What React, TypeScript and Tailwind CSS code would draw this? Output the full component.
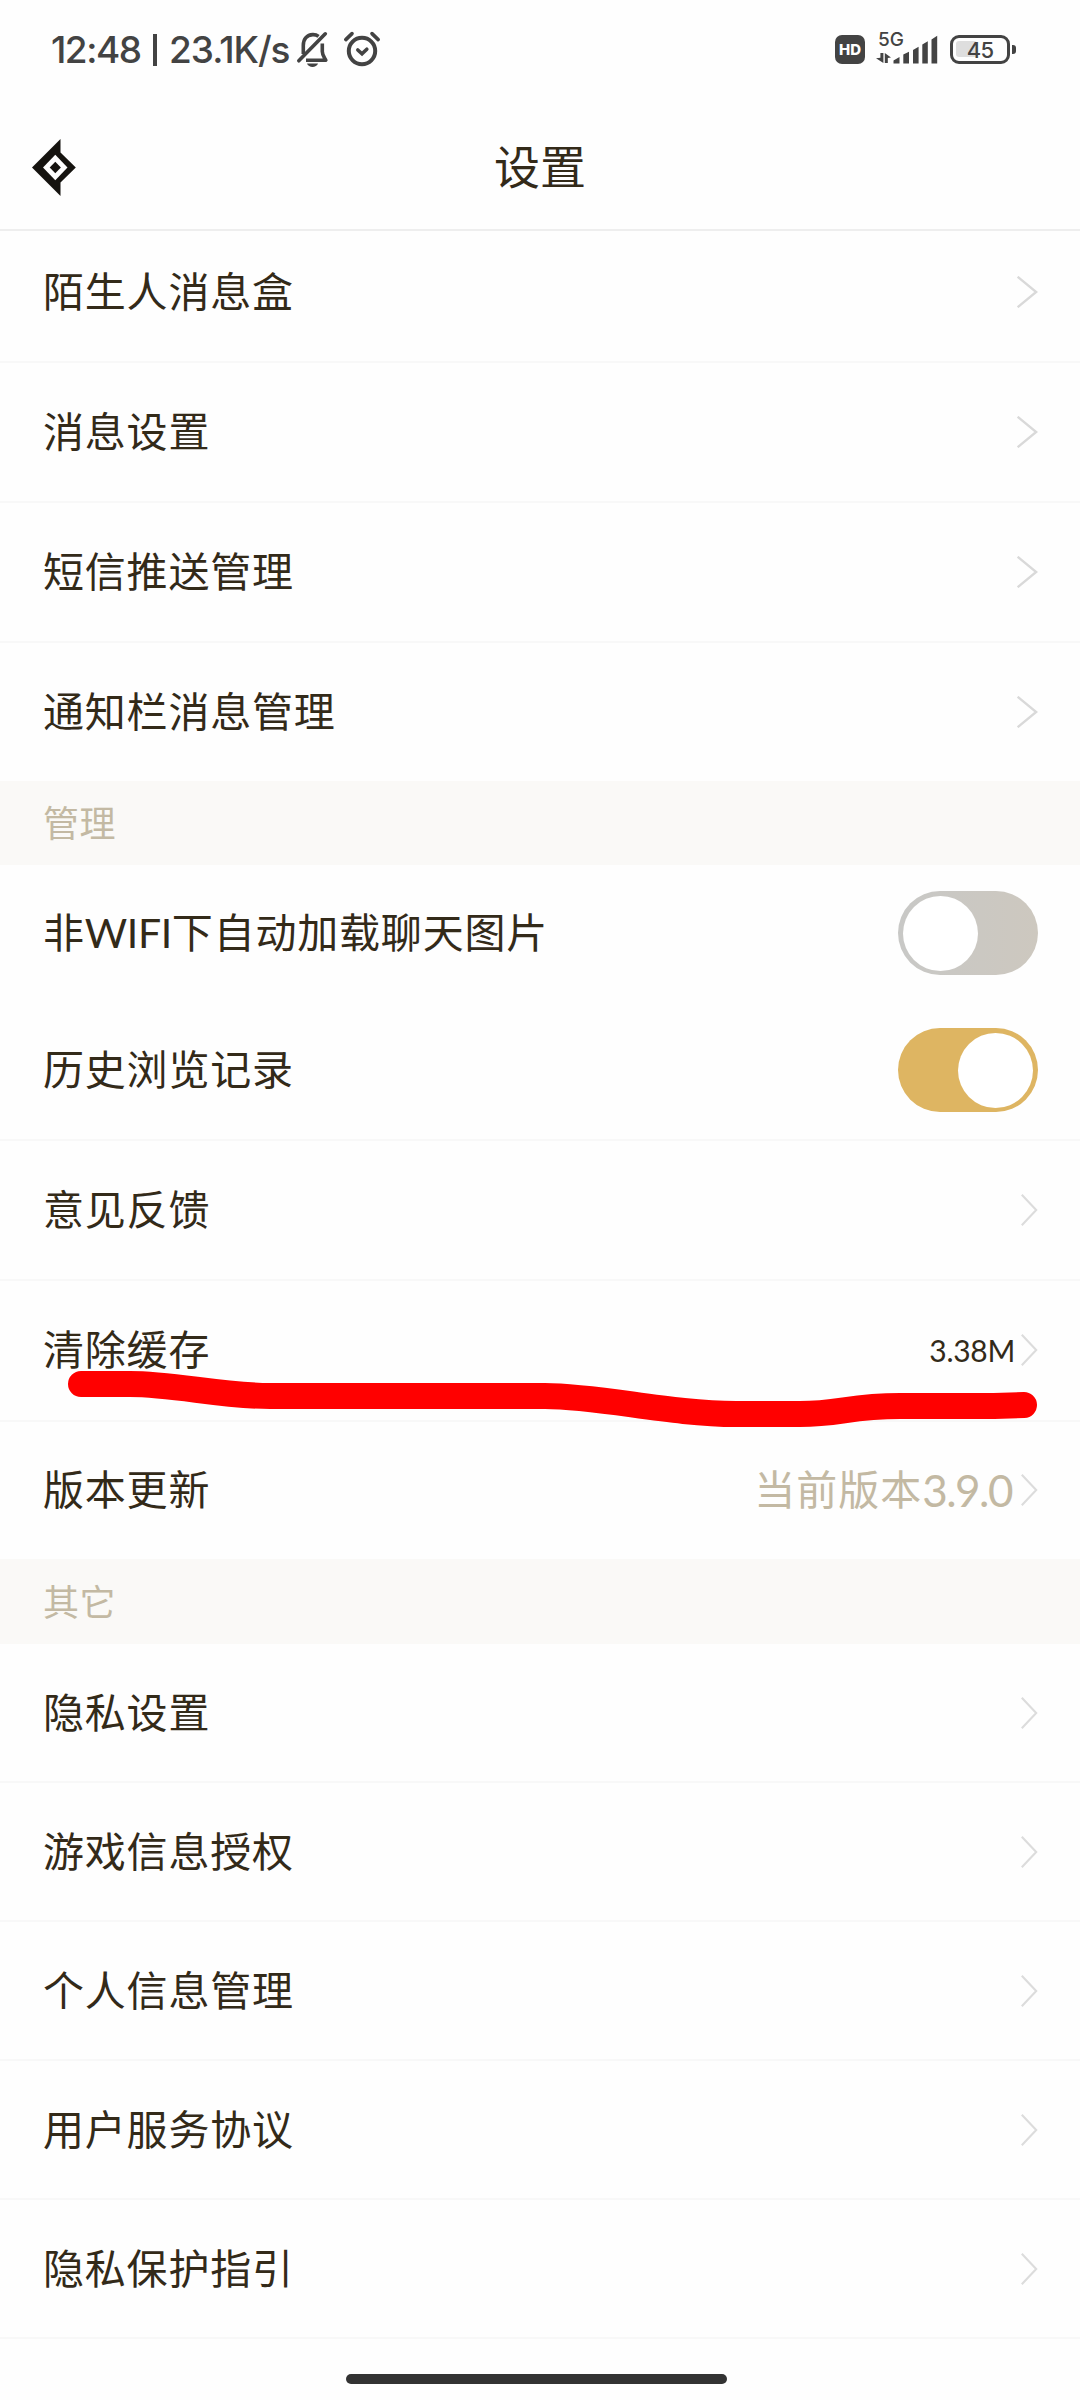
import type { ReactNode } from 'react';

const CJK = "font-['Lato','Noto_Sans_CJK_SC',sans-serif]";

function BellOffIcon() {
  return (
    <svg width="36" height="40" viewBox="0 0 36 40" fill="none" stroke="#434343" strokeWidth="3.6">
      <path d="M8.3 24V15.5C8.3 9 12 5 17.7 4.6C20 4.5 22 5.2 23.6 6.4" />
      <path d="M27.3 13.5V21.5C27.3 25 29 27 30.8 30.2H11" strokeLinejoin="round" />
      <path d="M3.8 30.8L30.3 3.8" strokeLinecap="round" />
      <path d="M12 33.6H23C21.6 38.2 13.4 38.2 12 33.6Z" fill="#434343" stroke="none" />
    </svg>
  );
}

function AlarmIcon() {
  return (
    <svg width="40" height="40" viewBox="0 0 40 40" fill="none" stroke="#434343" strokeLinecap="round">
      <circle cx="20" cy="21" r="13.2" strokeWidth="4" />
      <path d="M15.8 20L20 23.8L24.8 19.2" strokeWidth="3.6" />
      <path d="M3.8 9.6L10 3.6M36.2 9.6L30 3.6" strokeWidth="3.6" />
    </svg>
  );
}

function SignalIcon() {
  return (
    <svg width="64" height="32" viewBox="0 0 64 32" fill="#434343">
      <path d="M4.4 21H7.4V31L0 26.2L4.4 25.8ZM8.8 31V21L15 25.6L11.8 26V31Z" />
      <path d="M17.5 31.5V28.5L23.5 25V31.5ZM27.3 31.5V22.5L33 19.8V31.5ZM37 31.5V18L42.6 14.8V31.5ZM46.3 31.5V12.5L51.8 9.2V31.5ZM55.5 31.5V7.5L61.2 3.8V31.5Z" />
    </svg>
  );
}

function BackIcon() {
  return (
    <svg width="44" height="57" viewBox="0 0 44 57">
      <path d="M0 28.5L28.5 0V13.5L43.8 28.5L28.5 43.5V57Z" fill="#15130f" />
      <path d="M23.3 15.8L35.5 28.5L23.3 41.2L11 28.5Z" fill="#fefefe" />
      <path d="M23.3 22.8L28.9 28.5L23.3 34.2L17.7 28.5Z" fill="#15130f" />
    </svg>
  );
}

function Chevron({ wide }: { wide?: boolean }) {
  return wide ? (
    <svg width="21" height="32" viewBox="0 0 21 32" fill="none" stroke="#d9d9d9" strokeWidth="2.4">
      <path d="M0.6 0.8L19.2 16L0.6 31.2" />
    </svg>
  ) : (
    <svg width="17" height="32" viewBox="0 0 17 32" fill="none" stroke="#dcdcdc" strokeWidth="2.1">
      <path d="M0.8 0.8L15.2 16L0.8 31.2" />
    </svg>
  );
}

function Row({ label, height, line = true, children }: { label: ReactNode; height: string; line?: boolean; children: ReactNode }) {
  return (
    <div className={`flex items-center justify-between pl-[43px] pr-[42px] ${height} ${line ? 'border-b-2 border-[#f8f8f8]' : ''}`}>
      <span className="text-[41px] leading-[56px] tracking-[0.8px] text-[#332a19]">{label}</span>
      <div className="flex items-center">{children}</div>
    </div>
  );
}

function Section({ label, height }: { label: string; height: string }) {
  return (
    <div className={`flex items-center bg-[#faf9f7] pl-[43px] text-[36px] leading-none tracking-[0.4px] text-[#c3b9a3] ${height}`}>{label}</div>
  );
}

function Toggle({ on }: { on: boolean }) {
  return (
    <div className={`flex h-[84px] w-[140px] items-center rounded-full px-[5px] ${on ? 'justify-end bg-[#deb562]' : 'justify-start bg-gradient-to-r from-[#c8c8c6] to-[#cdc8bf]'}`}>
      <div className="size-[75px] rounded-full bg-white" />
    </div>
  );
}

export default function App() {
  return (
    <div className={`relative flex h-[2400px] w-[1080px] flex-col overflow-hidden bg-[#fefefe] ${CJK}`}>
      <div className="flex h-[100px] shrink-0 items-start justify-between pl-[51px] pr-[64px] text-[#434343]">
        <div className="flex items-start">
          <div className="mt-[28px] flex w-[244px] items-center whitespace-nowrap text-[37px] font-medium leading-[44px] font-['Inter',sans-serif]">
            <span className="w-[102px] tracking-[-1.5px]">12:48</span>
            <span className="mr-[12px] h-[32px] w-[4px] bg-[#434343]" />
            <span className="tracking-[-1px]">23.1K/s</span>
          </div>
          <div className="mt-[30px]"><BellOffIcon /></div>
          <div className="ml-[11px] mt-[30px]"><AlarmIcon /></div>
        </div>
        <div className="mt-[32px] flex items-start">
          <div className="mt-[3px] flex h-[29px] w-[30px] items-center justify-center rounded-[7px] bg-[#434343] text-[15px] font-extrabold leading-none text-white font-['Inter',sans-serif]">HD</div>
          <div className="relative ml-[11px]">
            <span className="absolute left-[2px] top-[-2px] text-[19px] font-medium leading-[20px] font-['Inter',sans-serif]">5G</span>
            <SignalIcon />
          </div>
          <div className="relative ml-[10px] mt-[3px] flex h-[29px] w-[60px] items-center justify-center rounded-[9px] border-[3.5px] border-[#434343]">
            <div className="absolute left-[3px] top-[3px] h-4 w-[21px] rounded-[3px] bg-[#dedede]" />
            <span className="relative text-[22px] font-medium leading-none tracking-[-0.8px] font-['Inter',sans-serif]">45</span>
          </div>
          <div className="ml-[2px] mt-[13px] h-[9px] w-[4px] rounded-r-[3px] bg-[#434343]" />
        </div>
      </div>

      <header className="z-10 grid h-[131px] shrink-0 grid-cols-3 items-center border-b-2 border-[#eeeeee] bg-[#fefefe]">
        <div className="pl-[32px] pt-[5px]"><BackIcon /></div>
        <h1 className="pt-[4px] text-center text-[46px] leading-none text-[#332a19]">设置</h1>
      </header>

      <main className="-mt-2 shrink-0">
        <Row label="陌生人消息盒" height="h-[140px]"><Chevron wide /></Row>
        <Row label="消息设置" height="h-[140px]"><Chevron wide /></Row>
        <Row label="短信推送管理" height="h-[140px]"><Chevron wide /></Row>
        <Row label="通知栏消息管理" height="h-[138px]" line={false}><Chevron wide /></Row>
        <Section label="管理" height="h-[84px]" />
        <Row
          label={<>非<span className="tracking-[-0.4px]">WIFI</span>下自动加载聊天图片</>}
          height="h-[136px]"
          line={false}
        >
          <Toggle on={false} />
        </Row>
        <Row label="历史浏览记录" height="h-[140px]"><Toggle on /></Row>
        <Row label="意见反馈" height="h-[140px] pb-[1px]"><Chevron /></Row>
        <Row label="清除缓存" height="h-[141px] pb-[2px]">
          <span className="mr-[6px] text-[30px] leading-none tracking-[-0.3px] text-[#332a19]">3.38M</span>
          <Chevron />
        </Row>
        <Row label="版本更新" height="h-[137px] pb-[2px]" line={false}>
          <span className="mr-[9px] flex items-center leading-[56px] text-[#c3b9a3]">
            <span className="text-[41px] tracking-[1px]">当前版本</span>
            <span className="text-[44px] tracking-[-1.5px]">3.9.0</span>
          </span>
          <Chevron />
        </Row>
        <Section label="其它" height="h-[85px]" />
        <Row label="隐私设置" height="h-[139px] pt-[1px]"><Chevron /></Row>
        <Row label="游戏信息授权" height="h-[139px] pt-[1px]"><Chevron /></Row>
        <Row label="个人信息管理" height="h-[139px] pt-[1px]"><Chevron /></Row>
        <Row label="用户服务协议" height="h-[139px] pt-[1px]"><Chevron /></Row>
        <Row label="隐私保护指引" height="h-[139px] pt-[1px]"><Chevron /></Row>
      </main>

      <div className="mr-[353px] mt-[35px] h-[10px] w-[381px] shrink-0 self-end rounded-full bg-[#333333]" />

      {/* Hand-drawn marker stroke under the cache row */}
      <svg className="absolute left-0 top-[1360px]" width="1080" height="80" viewBox="0 0 1080 80" fill="none">
        <path
          d="M81 24H130C175 24 220 36 270 36H545C600 36 670 54 736 54H800C840 54 850 46 900 46H994L1024 45"
          stroke="#ff0000"
          strokeWidth="26"
          strokeLinecap="round"
          strokeLinejoin="round"
        />
      </svg>
    </div>
  );
}
